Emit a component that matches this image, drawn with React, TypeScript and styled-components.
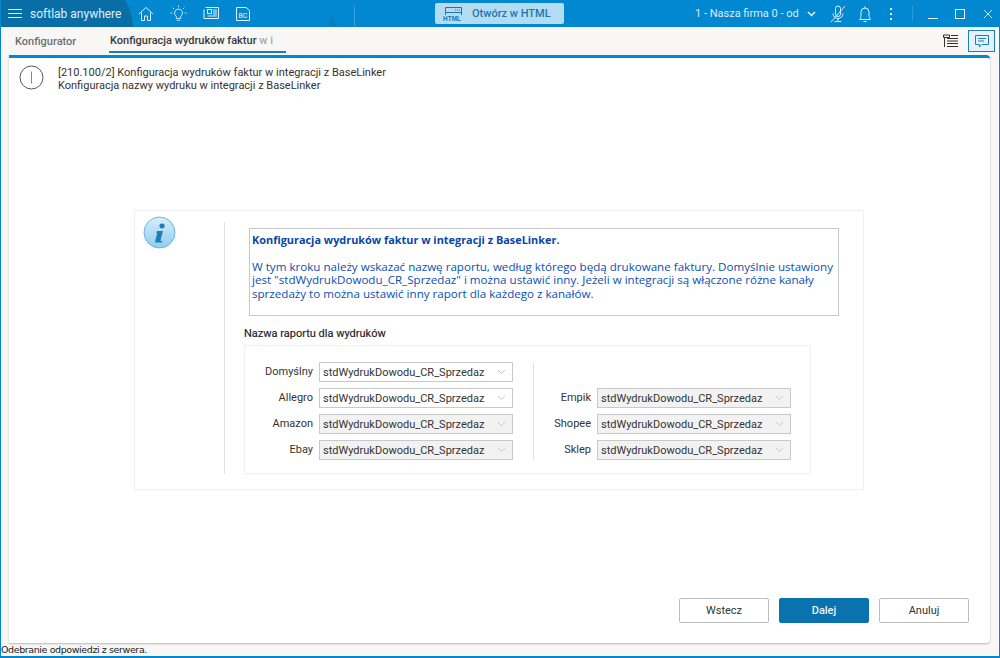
import React from "react";
import styled, { createGlobalStyle } from "styled-components";

const Global = createGlobalStyle`
  html, body { margin: 0; padding: 0; width: 1000px; height: 658px; overflow: hidden; background: #fff; }
  * { box-sizing: border-box; }
`;
const Win = styled.div`
  width: 1000px; height: 658px; display: flex; flex-direction: column;
  background: #f8f7f5; font-family: Roboto, "Liberation Sans", sans-serif;
  border: solid #0288d1; border-width: 0 1px 2px 1px; overflow: hidden;
`;
const TitleBar = styled.div`
  height: 27px; flex: none; margin: 0 -1px; background: #0288d1; display: flex; align-items: stretch; position: relative; color: #fff;
  &::after {
    content: ""; position: absolute; left: 330px; top: 13px; width: 7px; height: 14px;
    background: #0a7dbd; clip-path: polygon(0 0, 100% 100%, 0 100%);
  }
`;
const Brand = styled.div`
  width: 134px; flex: none; background: #0a6ea6; display: flex; align-items: center; gap: 8px; padding-left: 8px;
  clip-path: polygon(0 0, 125px 0, 129px 8px, 132px 17px, 133px 27px, 0 27px);
`;
const Burger = styled.span`
  width: 14px; height: 9px; border-top: 1px solid #e6f3fa; border-bottom: 1px solid #e6f3fa; position: relative;
  &::after { content: ""; position: absolute; left: 0; right: 0; top: 3px; height: 1px; background: #e6f3fa; }
`;
const BrandName = styled.span`font-size: 12px; color: #dff0f9; white-space: nowrap;`;
const QuickIcons = styled.div`display: flex; align-items: center; gap: 16px; padding-left: 4px; width: 221px; flex: none;`;
const Sep = styled.span`width: 1px; height: 21px; background: #35a0da; flex: none; margin-top: 6px; margin-left: 87px;`;
const HtmlBtn = styled.div`
  margin: 3px 0 0 80px; width: 129px; height: 21px; background: #b3dcf3; border-radius: 2px; flex: none;
  display: flex; align-items: center; gap: 10px; padding-left: 7px; color: #1a78ae; font-size: 11px; font-weight: 500;
`;
const HtmlIcon = styled.span`position: relative; width: 20px; height: 15px; display: block; flex: none; margin-top: 1px;`;
const HtmlTag = styled.span`
  position: absolute; left: 1px; bottom: 0; font: 700 6.5px/7px "Liberation Sans", sans-serif; color: #1a78ae; background: #b3dcf3; padding-right: 1px;
`;
const Company = styled.div`
  margin-left: 131px; width: 122px; font-size: 11px; color: #dcecf6; display: flex; align-items: center; gap: 8px; white-space: nowrap;
  svg { flex: none; }
`;
const RightIcons = styled.div`display: flex; align-items: center; position: absolute; left: 826px; top: 0; height: 27px;`;
const IconCell = styled.span<{ $w: number }>`width: ${p => p.$w}px; display: flex; justify-content: center; align-items: center; flex: none;`;
const WinSep = styled.span`width: 1px; height: 15px; background: #2e9ad6; flex: none; margin: 0 14px 0 10px;`;

const TabBar = styled.div`
  height: 27px; flex: none; display: flex; align-items: stretch; padding-left: 14px; position: relative;
`;
const Tab = styled.div<{ $active?: boolean }>`
  font-size: 11px; font-weight: 500; white-space: nowrap; display: flex; align-items: center; overflow: hidden;
  color: ${p => (p.$active ? "#3a3a3a" : "#6f6f6f")};
  ${p => p.$active ? "width: 177px; margin-left: 32px; padding-left: 1px; border-bottom: 2px solid #1b7db5; margin-bottom: 1px; padding-top: 2px;" : "padding-top: 1px; width: 62px;"}
`;
const Fade = styled.span`color: #aaa;`;
const TabTools = styled.div`position: absolute; right: 4px; top: 3px; display: flex; gap: 10px; align-items: center;`;
const ChatBtn = styled.div`
  width: 27px; height: 22px; border: 1px solid #1b80b8; background: #e3f1f9; display: flex; align-items: center; justify-content: center;
`;
const Panel = styled.div`
  flex: 1; margin: 1px 9px 0 8px; background: #fff; border-top: 3px solid #0288d1; border-radius: 0 4px 4px 0;
  box-shadow: 0 1px 2px rgba(0,0,0,.25); display: flex; flex-direction: column; position: relative; min-height: 0;
`;
const Header = styled.div`height: 47px; display: flex; padding: 7px 0 0 10px; gap: 14px; flex: none;`;
const HeaderText = styled.div`font-size: 11px; line-height: 13px; color: #333; padding-top: 1px;`;
const Body = styled.div`flex: 1; display: flex; justify-content: center; padding: 105px 1px 0 0;`;
const Card = styled.div`
  width: 730px; height: 280px; border: 1px solid #f0f0f0; display: flex; padding: 5px 0 15px 8px;
`;
const CardIcon = styled.div`width: 81px; flex: none;`;
const CardMain = styled.div`
  margin-top: 6px; border-left: 1px solid #e2e2e2; padding-left: 19px; width: 587px; display: flex; flex-direction: column;
`;
const InfoBox = styled.div`
  width: 590px; margin-left: 5px; height: 88px; border: 1px solid #c8c8c8; padding: 4px 2px; margin-top: 6px;
  font: 11.6px/13.4px "Open Sans", "Noto Sans", sans-serif; color: #0a50b4; flex: none;
`;
const InfoTitle = styled.div`font-weight: 700; font-size: 10.9px; margin-bottom: 13.4px; color: #0747a6;`;
const SectionLabel = styled.div`font: 400 11px/13px Roboto, sans-serif; color: #222; margin-top: 11px; height: 18px; -webkit-text-stroke: 0.15px #222;`;
const FormBox = styled.div`
  width: 567px; height: 129px; border: 1px solid #f0f0f0; display: flex; padding-top: 16px; flex: none;
`;
const Col = styled.div<{ $labelW: number; $w: number }>`
  width: ${p => p.$w}px; flex: none; display: grid; grid-template-columns: ${p => p.$labelW}px 194px; grid-auto-rows: 20px; row-gap: 6px; column-gap: 6px; align-content: start;
`;
const Divider = styled.div`width: 1px; height: 98px; background: #e2e2e2; flex: none;`;
const FieldLabel = styled.div`font-size: 11px; line-height: 20px; text-align: right; color: #333;`;
const Select = styled.div<{ $off?: boolean }>`
  height: 20px; border: 1px solid #c9c9c9; background: ${p => (p.$off ? "#f2f2f2" : "#fff")};
  font-size: 11px; color: #333; display: flex; align-items: center; justify-content: space-between; padding: 0 6px 0 3px;
`;
const Footer = styled.div`flex: none; height: 35px; margin-bottom: 10px; display: flex; justify-content: flex-end; gap: 10px; padding-right: 21px; align-items: flex-start;`;
const Btn = styled.div<{ $primary?: boolean }>`
  width: 90px; height: 25px; border-radius: 2px; font-size: 11px; display: flex; align-items: center; justify-content: center;
  border: 1px solid ${p => (p.$primary ? "#0a73ae" : "#bdbdbd")}; background: ${p => (p.$primary ? "#0a73ae" : "#fff")};
  color: ${p => (p.$primary ? "#e8f4fb" : "#333")}; font-weight: ${p => (p.$primary ? 500 : 400)};
`;
const Status = styled.div`height: 13px; flex: none; font: 9.5px/14px "DejaVu Sans", sans-serif; color: #222; letter-spacing: -0.4px; white-space: nowrap;`;

const Chev = ({ color = "#c8c8c8", w = 1 }: { color?: string; w?: number }) => (
  <svg width="9" height="6" viewBox="0 0 9 6" fill="none" stroke={color} strokeWidth={w}><path d="M1 1l3.5 3.5L8 1" /></svg>
);

const Home = () => (
  <svg width="16" height="16" viewBox="0 0 16 16" fill="none" stroke="#dff0f9" strokeWidth="1"><path d="M1 8L8 1.5 15 8M3.5 6.5V14.5H6.5V10H9.5V14.5H12.5V6.5" /></svg>
);
const Bulb = () => (
  <svg width="17" height="17" viewBox="0 0 19 19" fill="none" stroke="#dff0f9" strokeWidth="1">
    <path d="M9.500 4.500a4.500 4.500 0 0 0-2.500 8.200V15h5v-2.300a4.500 4.500 0 0 0-2.500-8.200zM7.500 17h4" />
    <path d="M9.500 0.500V2.500M3 3l1.500 1.500M16 3l-1.500 1.500M0.500 9H2.500M16.500 9h2" />
  </svg>
);
const News = () => (
  <svg width="16" height="13" viewBox="0 0 16 13" fill="none" stroke="#e8f4fb" strokeWidth="1">
    <path d="M2.500 0.500h13v11h-14.500V2.500" /><rect x="4.500" y="2.500" width="4" height="4" /><path d="M10 3h4M10 5h4M10 7h4M4.500 9h9.500" />
  </svg>
);
const Bc = () => (
  <svg width="16" height="16" viewBox="0 0 16 16" fill="none">
    <path d="M1.500 1.500h9.500l3.500 3v10h-13z" stroke="#dff0f9" strokeWidth="1" />
    <text x="3.500" y="12" fontSize="7" fill="#e8f4fb" fontFamily="Roboto, sans-serif">BC</text>
  </svg>
);
const HtmlGlyph = () => (
  <HtmlIcon>
    <svg width="20" height="15" viewBox="0 0 20 15" fill="none" stroke="#1a78ae" strokeWidth="1">
      <path d="M3.500 11V0.500H19.500V14H16M3.500 5.500H19.500M6 8.500H12M13 8.500H18" />
      <path d="M13 3h1M15 3h1M17 3h1" />
    </svg>
    <HtmlTag>HTML</HtmlTag>
  </HtmlIcon>
);
const Mic = () => (
  <svg width="16" height="18" viewBox="0 0 16 18" fill="none" stroke="#dff0f9" strokeWidth="1">
    <path d="M5.500 9V3.500a2.500 2.500 0 0 1 5 0V9a2.500 2.500 0 0 1-5 0zM3 8.500a5 5 0 0 0 10 0M8 13.500V16M4.500 16.500h7M1 17L15 1" />
  </svg>
);
const Bell = () => (
  <svg width="14" height="18" viewBox="0 0 14 18" fill="none" stroke="#dff0f9" strokeWidth="1">
    <path d="M1.500 14.500h11c-1-1-1.500-2.500-1.500-4.500V7a4 4 0 0 0-8 0v3c0 2-.5 3.500-1.500 4.500zM7 1.500V3M5.500 16.500h3" />
  </svg>
);
const Dots = () => (
  <svg width="4" height="12" viewBox="0 0 4 12" fill="#e8f4fb"><rect x="1" y="0" width="2" height="2" /><rect x="1" y="5" width="2" height="2" /><rect x="1" y="10" width="2" height="2" /></svg>
);
const Min = () => <svg width="10" height="10" viewBox="0 0 10 10" stroke="#e8f4fb"><path d="M0 9.500h10" /></svg>;
const Max = () => <svg width="10" height="10" viewBox="0 0 10 10" fill="none" stroke="#e8f4fb"><rect x="0.500" y="0.500" width="9" height="9" /></svg>;
const Close = () => <svg width="10" height="10" viewBox="0 0 10 10" stroke="#c4e3f4"><path d="M1 1l8 8M9 1l-8 8" /></svg>;
const Tree = () => (
  <svg width="15" height="14" viewBox="0 0 15 14" fill="none" stroke="#333" strokeWidth="1">
    <path d="M0.500 1h6v2.500h-6zM1.500 3.500V13" /><path d="M4 4.500h11M4 7h11M4 9.500h11M4 12.500h11" />
    <path d="M8 1.500h7" />
  </svg>
);
const Chat = () => (
  <svg width="14" height="13" viewBox="0 0 14 13" fill="none" stroke="#1b80b8" strokeWidth="1">
    <path d="M0.500 0.500h13v9H7l-2.500 2.500V9.500h-4z" /><path d="M3 3.500h8M3 6h6" />
  </svg>
);
const CircleI = () => (
  <svg width="25" height="25" viewBox="0 0 25 25" fill="none" stroke="#555" strokeWidth="1">
    <circle cx="12.500" cy="12.500" r="11.500" /><path d="M12.500 6.500v12" stroke="#888" />
  </svg>
);
const BigInfo = () => (
  <svg width="33" height="33" viewBox="0 0 33 33">
    <defs>
      <linearGradient id="g" x1="0" y1="0" x2="0" y2="1"><stop offset="0" stopColor="#d8eefa" /><stop offset="1" stopColor="#8fcdee" /></linearGradient>
    </defs>
    <circle cx="16.500" cy="16.500" r="15.500" fill="url(#g)" stroke="#6fb4d8" />
    <ellipse cx="19" cy="10" rx="2.600" ry="2.400" fill="#1f7fae" />
    <path d="M14 15h6l-2.500 9.500q0 1 2 .5l-.5 1.500h-6q-1.200 0-.8-1.500l2-8h-1z" fill="#1f7fae" />
  </svg>
);

const leftRows: [string, boolean][] = [["Domyślny", false], ["Allegro", false], ["Amazon", true], ["Ebay", true]];
const rightRows = ["Empik", "Shopee", "Sklep"];

const Field = ({ label, off }: { label: string; off?: boolean }) => (
  <>
    <FieldLabel>{label}</FieldLabel>
    <Select $off={off}>stdWydrukDowodu_CR_Sprzedaz<Chev /></Select>
  </>
);

const Spacer = styled.div`grid-column: 1 / 3;`;

export default function App() {
  return (
    <Win>
      <Global />
      <TitleBar>
        <Brand><Burger /><BrandName>softlab anywhere</BrandName></Brand>
        <QuickIcons><Home /><Bulb /><News /><Bc /><Sep /></QuickIcons>
        <HtmlBtn><HtmlGlyph />Otwórz w HTML</HtmlBtn>
        <Company>1 - Nasza firma 0 - od<Chev color="#e8f4fb" w={1.5} /></Company>
        <RightIcons>
          <IconCell $w={24}><Mic /></IconCell>
          <IconCell $w={30}><Bell /></IconCell>
          <IconCell $w={22}><Dots /></IconCell>
          <WinSep />
          <IconCell $w={12}><Min /></IconCell>
          <IconCell $w={41}><Max /></IconCell>
          <IconCell $w={15}><Close /></IconCell>
        </RightIcons>
      </TitleBar>
      <TabBar>
        <Tab>Konfigurator</Tab>
        <Tab $active>Konfiguracja wydruków faktur&nbsp;<Fade>w i</Fade></Tab>
        <TabTools><Tree /><ChatBtn><Chat /></ChatBtn></TabTools>
      </TabBar>
      <Panel>
        <Header>
          <CircleI />
          <HeaderText>
            [210.100/2] Konfiguracja wydruków faktur w integracji z BaseLinker<br />
            Konfiguracja nazwy wydruku w integracji z BaseLinker
          </HeaderText>
        </Header>
        <Body>
          <Card>
            <CardIcon><BigInfo /></CardIcon>
            <CardMain>
              <InfoBox>
                <InfoTitle>Konfiguracja wydruków faktur w integracji z BaseLinker.</InfoTitle>
                W tym kroku należy wskazać nazwę raportu, według którego będą drukowane faktury. Domyślnie ustawiony jest "stdWydrukDowodu_CR_Sprzedaz" i można ustawić inny. Jeżeli w integracji są włączone różne kanały sprzedaży to można ustawić inny raport dla każdego z kanałów.
              </InfoBox>
              <SectionLabel>Nazwa raportu dla wydruków</SectionLabel>
              <FormBox>
                <Col $labelW={68} $w={288}>
                  {leftRows.map(([l, o]) => <Field key={l} label={l} off={o} />)}
                </Col>
                <Divider />
                <Col $labelW={57} $w={270}>
                  <Spacer />
                  {rightRows.map(l => <Field key={l} label={l} off />)}
                </Col>
              </FormBox>
            </CardMain>
          </Card>
        </Body>
        <Footer>
          <Btn>Wstecz</Btn>
          <Btn $primary>Dalej</Btn>
          <Btn>Anuluj</Btn>
        </Footer>
      </Panel>
      <Status>Odebranie odpowiedzi z serwera.</Status>
    </Win>
  );
}
